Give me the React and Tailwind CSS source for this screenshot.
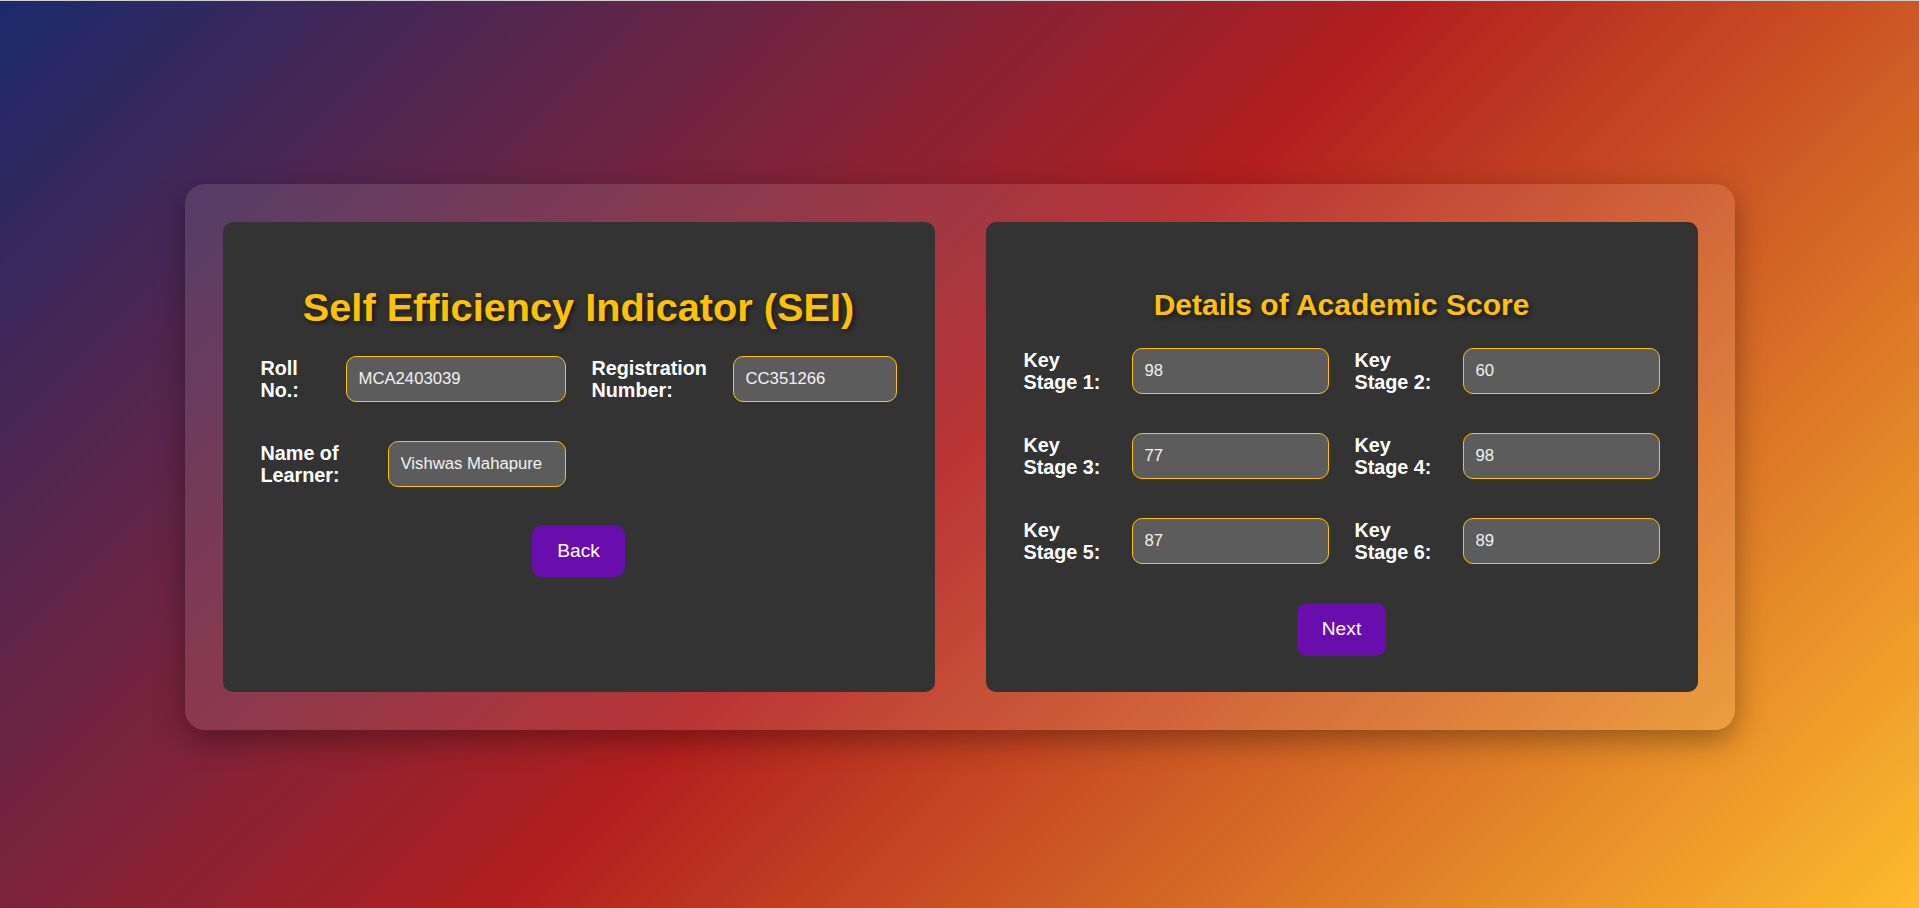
import React from "react";

const inputCls =
  "min-w-0 flex-1 h-[46px] rounded-[10px] border border-[#ffc107] bg-[#5c5c5c] px-3 text-[16.7px] text-[#f2f2f2] outline-none";
const labelCls = "shrink-0 text-[19.8px] font-bold leading-[22px] text-white";

function Field({ label, value, labelW }) {
  return (
    <div className="flex items-center gap-5">
      <label className={`${labelCls} ${labelW}`}>{label}</label>
      <input className={inputCls} defaultValue={value} />
    </div>
  );
}

export default function App() {
  return (
    <div
      className="h-[908px] w-full overflow-hidden border-t border-[#cfcfcf] bg-[linear-gradient(135deg,#1a2a6c,#b21f1f,#fdbb2d)] pt-[183px]"
      style={{ fontFamily: '"Liberation Sans", Arial, sans-serif' }}
    >
      <div className="mx-auto flex w-[1550px] gap-[51px] rounded-[20px] bg-white/10 p-[38px] pr-[37px] shadow-[0_10px_30px_rgba(0,0,0,0.35)]">
        {/* Left card */}
        <div className="flex h-[470px] w-[712px] flex-col rounded-[10px] bg-[#333333] px-[38px] pt-[62px]">
          <h1 className="text-center text-[39.7px] font-bold leading-[46px] text-[#ffc107] [text-shadow:2px_2px_5px_rgba(0,0,0,0.6)]">
            Self Efficiency Indicator (SEI)
          </h1>
          <div className="mt-[26px] grid grid-cols-2 gap-x-[26px] gap-y-[39px]">
            <Field label="Roll No.:" value="MCA2403039" labelW="w-[65px]" />
            <Field label="Registration Number:" value="CC351266" labelW="w-[121px]" />
            <Field label="Name of Learner:" value="Vishwas Mahapure" labelW="w-[107px]" />
          </div>
          <div className="mt-[38px] flex justify-center">
            <button className="h-[52px] rounded-[10px] bg-[#6a0dad] px-[25px] text-[19.2px] text-white">
              Back
            </button>
          </div>
        </div>

        {/* Right card */}
        <div className="flex h-[470px] w-[712px] flex-col rounded-[10px] bg-[#333333] px-[38px] pt-[66px]">
          <h2 className="text-center text-[30px] font-bold leading-[34px] text-[#ffc107] [text-shadow:2px_2px_5px_rgba(0,0,0,0.6)]">
            Details of Academic Score
          </h2>
          <div className="mt-[26px] grid grid-cols-2 gap-x-[26px] gap-y-[39px]">
            <Field label="Key Stage 1:" value="98" labelW="w-[88px]" />
            <Field label="Key Stage 2:" value="60" labelW="w-[88px]" />
            <Field label="Key Stage 3:" value="77" labelW="w-[88px]" />
            <Field label="Key Stage 4:" value="98" labelW="w-[88px]" />
            <Field label="Key Stage 5:" value="87" labelW="w-[88px]" />
            <Field label="Key Stage 6:" value="89" labelW="w-[88px]" />
          </div>
          <div className="mt-[39px] flex justify-center">
            <button className="h-[53px] rounded-[10px] bg-[#6a0dad] px-[25px] text-[19.2px] text-white">
              Next
            </button>
          </div>
        </div>
      </div>
    </div>
  );
}
